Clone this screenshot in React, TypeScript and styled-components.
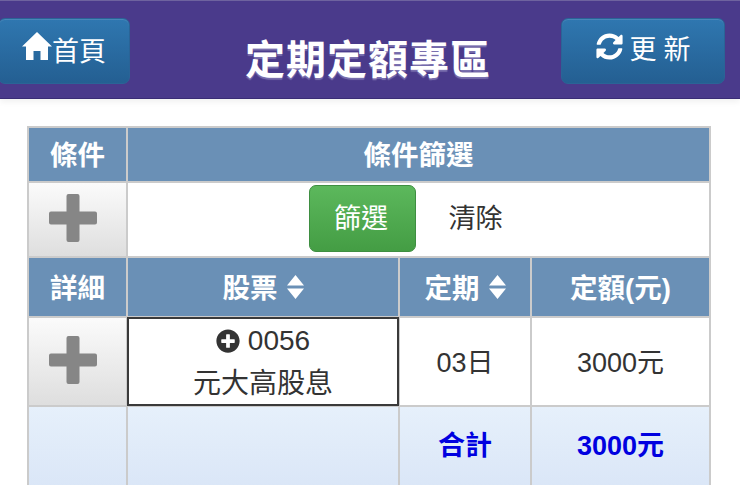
import React from 'react';
import styled, { createGlobalStyle } from 'styled-components';
import { FaPlusCircle, FaSyncAlt } from 'react-icons/fa';

const GlobalStyle = createGlobalStyle`
  html, body {
    margin: 0;
    padding: 0;
    height: 485px;
    overflow: hidden;
    background: #fff;
    font-family: "Liberation Sans", "Noto Sans CJK TC", sans-serif;
    color: #333;
  }
`;
const Header = styled.header`
  box-sizing: border-box;
  height: 99px;
  padding: 17px 15px 0 0;
  display: grid;
  grid-template-columns: 1fr auto 1fr;
  align-items: start;
  background: #4a3a8b;
  border-top: 1px solid #6e639f;
  border-bottom: 1px solid #3a2d75;
  box-shadow: 0 3px 6px rgba(0, 0, 0, 0.06);
`;
const HeaderButton = styled.a<{ $width: number; $left?: number }>`
  box-sizing: border-box;
  width: ${({ $width }) => $width}px;
  height: 66px;
  margin-left: ${({ $left }) => $left || 0}px;
  justify-self: ${({ $left }) => ($left ? 'start' : 'end')};
  display: flex;
  align-items: center;
  justify-content: center;
  color: #fff;
  font-size: 27px;
  border-radius: 7px;
  border: 1px solid #2a6496;
  background: linear-gradient(#2f77b0, #245f92);
  box-shadow: inset 0 1px 0 rgba(255, 255, 255, 0.12);
`;
const Title = styled.h1`
  margin: 16px 0 0;
  padding-left: 11px;
  font-size: 40px;
  line-height: 52px;
  font-weight: 700;
  letter-spacing: 1px;
  color: #fff;
  text-shadow: 0 2px 1px rgba(170, 165, 210, 0.5);
`;
const HomeIcon = styled.svg`
  width: 30px;
  height: 30px;
  margin-top: -10px;
  fill: #fff;
`;
const RefreshIcon = styled(FaSyncAlt)`
  width: 27px;
  height: 27px;
  margin-right: 7px;
  margin-top: -10px;
`;
const UpdateLabel = styled.span`
  letter-spacing: 7px;
  margin-right: -7px;
  margin-top: -8px;
`;
const HomeLabel = styled.span`
  margin-top: -4px;
`;
const Content = styled.main`
  padding: 27px 29px 0 27px;
`;
const Table = styled.table`
  width: 682px;
  table-layout: fixed;
  border-collapse: collapse;
  font-size: 27px;
  text-align: center;
`;
const HeadCell = styled.th`
  padding: 0 0 3px;
  background: #6a90b6;
  color: #fff;
  font-weight: 700;
  font-size: 27.5px;
  border: 2.5px solid #cbcbcb;
`;
const Cell = styled.td`
  padding: 0 0 3px;
  background: #fff;
  border: 2.5px solid #cbcbcb;
`;
const ToggleCell = styled(Cell)`
  background: linear-gradient(#fbfbfb, #dedede);
  vertical-align: middle;
`;
const TotalCell = styled(Cell)`
  padding-bottom: 9px;
  background: linear-gradient(#e6f0fb, #dae6f7);
  color: #0000e0;
  font-weight: 700;
`;
const StockCell = styled(Cell)`
  padding: 1px 0 0;
  outline: 2px solid #3a3a3a;
  outline-offset: -2px;
  font-size: 28px;
  line-height: 43px;
`;
const PlusIcon = styled.svg`
  display: block;
  width: 48px;
  height: 48px;
  margin-left: 20px;
  fill: #868686;
`;
const SortIcon = styled.svg`
  width: 17px;
  height: 24px;
  margin-left: 9px;
  vertical-align: -1px;
  fill: #fff;
`;
const RowIcon = styled(FaPlusCircle)`
  width: 24px;
  height: 24px;
  margin-right: 8px;
  vertical-align: -3px;
  color: #333;
`;
const FilterBar = styled.div`
  display: flex;
  align-items: center;
  justify-content: center;
  gap: 33px;
`;
const FilterButton = styled.button`
  box-sizing: border-box;
  width: 107px;
  height: 67px;
  padding: 0 2px 3px 0;
  font: inherit;
  color: #fff;
  border-radius: 7px;
  border: 1px solid #3e8e41;
  background: linear-gradient(#5cb85c, #449d44);
`;
const ClearButton = styled.button`
  width: 80px;
  padding: 0 0 3px;
  border: 0;
  background: none;
  font: inherit;
  color: #333;
  text-align: left;
`;

const Plus = () => (
  <PlusIcon viewBox="0 0 48 48">
    <path d="M19.5 0h9a2 2 0 0 1 2 2v15.5H46a2 2 0 0 1 2 2v9a2 2 0 0 1-2 2H30.500V46a2 2 0 0 1-2 2h-9a2 2 0 0 1-2-2V30.500H2a2 2 0 0 1-2-2v-9a2 2 0 0 1 2-2h15.500V2a2 2 0 0 1 2-2z" />
  </PlusIcon>
);

const Sort = () => (
  <SortIcon viewBox="0 0 17 24">
    <path d="M8.500 0 17 10.500H0zM0 13.500h17L8.500 24z" />
  </SortIcon>
);

const App: React.FC = () => (
  <>
    <GlobalStyle />
    <Header>
      <HeaderButton $width={132} $left={-2}>
        <HomeIcon viewBox="0 0 30 30">
          <path d="M15 1 30 15.500h-4V29h-7.500v-9h-7v9H4V15.500H0z" />
        </HomeIcon>
        <HomeLabel>首頁</HomeLabel>
      </HeaderButton>
      <Title>定期定額專區</Title>
      <HeaderButton $width={164}>
        <RefreshIcon />
        <UpdateLabel>更新</UpdateLabel>
      </HeaderButton>
    </Header>
    <Content>
      <Table>
        <colgroup>
          <col width="99" />
          <col width="272" />
          <col width="132" />
          <col width="179" />
        </colgroup>
        <tbody>
          <tr style={{ height: 55 }}>
            <HeadCell>條件</HeadCell>
            <HeadCell colSpan={3}>條件篩選</HeadCell>
          </tr>
          <tr style={{ height: 75 }}>
            <ToggleCell>
              <Plus />
            </ToggleCell>
            <Cell colSpan={3}>
              <FilterBar>
                <FilterButton>篩選</FilterButton>
                <ClearButton>清除</ClearButton>
              </FilterBar>
            </Cell>
          </tr>
          <tr style={{ height: 60 }}>
            <HeadCell>詳細</HeadCell>
            <HeadCell>
              股票
              <Sort />
            </HeadCell>
            <HeadCell>
              定期
              <Sort />
            </HeadCell>
            <HeadCell>定額(元)</HeadCell>
          </tr>
          <tr style={{ height: 88 }}>
            <ToggleCell>
              <Plus />
            </ToggleCell>
            <StockCell>
              <RowIcon />
              0056
              <br />
              元大高股息
            </StockCell>
            <Cell>03日</Cell>
            <Cell>3000元</Cell>
          </tr>
          <tr style={{ height: 84 }}>
            <TotalCell />
            <TotalCell />
            <TotalCell>合計</TotalCell>
            <TotalCell>3000元</TotalCell>
          </tr>
        </tbody>
      </Table>
    </Content>
  </>
);

export default App;
